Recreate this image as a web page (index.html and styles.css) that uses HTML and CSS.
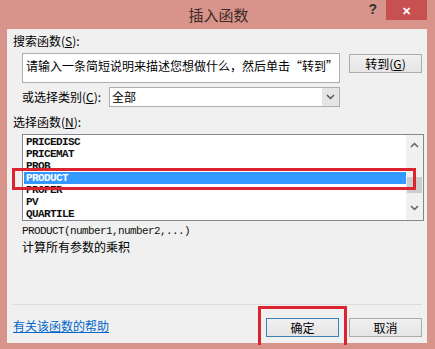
FILE: index.html
```html
<!DOCTYPE html>
<html lang="zh-CN">
<head>
    <meta charset="UTF-8">
    <meta name="viewport" content="width=device-width, initial-scale=1.0">
    <title>插入函数</title>
    <link rel="stylesheet" href="styles.css">
</head>
<body>
    <div class="window">
        <div class="titlebar">
            <span class="title">插入函数</span>
            <span class="help">?</span>
            <span class="close">&#x2715;</span>
        </div>
        <div class="client">
            <div class="label">搜索函数(<u>S</u>):</div>
            <div class="search-row">
                <div class="search-box">请输入一条简短说明来描述您想做什么，然后单击“转到”</div>
                <div class="btn go">转到(<u>G</u>)</div>
            </div>
            <div class="category-row">
                <span class="cat-label">或选择类别(<u>C</u>):</span>
                <div class="select">
                    <span class="select-value">全部</span>
                    <span class="select-arrow">
                        <svg width="9" height="6" viewBox="0 0 9 6"><path d="M1 1 L4.5 4.5 L8 1" fill="none" stroke="#555" stroke-width="1.5"/></svg>
                    </span>
                </div>
            </div>
            <div class="label list-label">选择函数(<u>N</u>):</div>
            <div class="listbox">
                <div class="items">
                    <div class="item">PRICEDISC</div>
                    <div class="item">PRICEMAT</div>
                    <div class="item">PROB</div>
                    <div class="item selected">PRODUCT</div>
                    <div class="item">PROPER</div>
                    <div class="item">PV</div>
                    <div class="item">QUARTILE</div>
                </div>
                <div class="scrollbar">
                    <svg width="9" height="6" viewBox="0 0 9 6"><path d="M1 5 L4.5 1.5 L8 5" fill="none" stroke="#606060" stroke-width="1.5"/></svg>
                    <div class="thumb"></div>
                    <svg width="9" height="6" viewBox="0 0 9 6"><path d="M1 1 L4.5 4.5 L8 1" fill="none" stroke="#606060" stroke-width="1.5"/></svg>
                </div>
                <div class="mark mark-item"></div>
            </div>
            <div class="signature">PRODUCT(number1,number2,...)</div>
            <div class="desc">计算所有参数的乘积</div>
            <div class="separator"></div>
            <div class="footer">
                <a class="help-link" href="#">有关该函数的帮助</a>
                <div class="buttons">
                    <div class="btn ok">确定<div class="mark mark-ok"></div></div>
                    <div class="btn">取消</div>
                </div>
            </div>
        </div>
    </div>
</body>
</html>
```

FILE: styles.css
```css
body {
    margin: 0;
    font-family: "Noto Sans CJK SC", "Noto Sans", sans-serif;
    font-size: 12px;
    color: #000;
}

.window {
    width: 435px;
    height: 349px;
    background-color: #d8938a;
    padding: 0 8px 6px 7px;
    box-sizing: border-box;
    display: flex;
    flex-direction: column;
}

.titlebar {
    height: 29px;
    position: relative;
    display: flex;
    justify-content: center;
    align-items: center;
}

.title {
    font-size: 15px;
    color: #3a2a28;
    margin-left: 3px;
}

.help {
    position: absolute;
    right: 50px;
    top: 1px;
    font-family: "Liberation Sans", sans-serif;
    font-weight: bold;
    font-size: 14px;
    color: #333;
}

.close {
    position: absolute;
    right: 0;
    top: 0;
    width: 41px;
    height: 20px;
    background-color: #c75050;
    color: #fff;
    font-size: 11px;
    font-weight: bold;
    display: flex;
    align-items: center;
    justify-content: center;
}

.client {
    flex: 1;
    background-color: #f0f0f0;
    padding: 5px 0 0 6px;
    display: flex;
    flex-direction: column;
    line-height: 14px;
}

.label u, .cat-label u, .go u {
    text-underline-offset: 1px;
}

.search-row {
    display: flex;
    margin: 5px 0 0 9px;
}

.search-box {
    width: 318px;
    height: 30px;
    box-sizing: border-box;
    background: #fff;
    border: 1px solid #abadb3;
    padding: 5px 3px;
    line-height: 14px;
    white-space: nowrap;
    overflow: hidden;
}

.btn {
    width: 73px;
    height: 19px;
    box-sizing: border-box;
    border: 1px solid #acacac;
    background: linear-gradient(#f0f0f0, #e5e5e5);
    display: flex;
    align-items: center;
    justify-content: center;
    line-height: 14px;
    position: relative;
}

.go {
    margin: 1px 0 0 9px;
}

.category-row {
    display: flex;
    align-items: center;
    margin: 4px 0 0 9px;
}

.cat-label {
    width: 87px;
}

.select {
    width: 231px;
    height: 20px;
    box-sizing: border-box;
    background: #fff;
    border: 1px solid #abadb3;
    display: flex;
    align-items: center;
    justify-content: space-between;
}

.select-value {
    padding-left: 2px;
}

.select-arrow {
    width: 17px;
    height: 18px;
    background: #e5e5e5;
    display: flex;
    align-items: center;
    justify-content: center;
}

.list-label {
    margin-top: 8px;
}

.listbox {
    position: relative;
    margin: 5px 0 0 9px;
    width: 402px;
    height: 87px;
    box-sizing: border-box;
    border: 1px solid #828790;
    background: #fff;
    display: flex;
}

.items {
    flex: 1;
    padding: 1px 0 0 1px;
    overflow: hidden;
}

.item {
    height: 12px;
    line-height: 12px;
    padding-left: 2px;
    font-family: "Liberation Mono", monospace;
    font-size: 11px;
    letter-spacing: -0.6px;
    font-weight: bold;
    color: #111;
}

.item.selected {
    background-color: #3399ff;
    color: #fff;
}

.scrollbar {
    width: 17px;
    background: #f0f0f0;
    display: flex;
    flex-direction: column;
    align-items: center;
    padding: 7px 0 5px;
    box-sizing: border-box;
}

.thumb {
    width: 15px;
    height: 16px;
    background: #cdcdcd;
    margin: 29px 0 12px;
}

.mark {
    position: absolute;
    border: 3px solid #dc2330;
    box-sizing: border-box;
}

.mark-item {
    left: -11px;
    top: 33px;
    width: 404px;
    height: 22px;
}

.signature {
    margin: 3px 0 0 9px;
    font-family: "Liberation Mono", monospace;
    font-size: 11px;
    letter-spacing: -0.6px;
    color: #111;
}

.desc {
    margin: 2px 0 0 9px;
}

.separator {
    margin: 50px 5px 0 0;
    height: 1px;
    background: #dcdcdc;
}

.footer {
    display: flex;
    justify-content: space-between;
    align-items: center;
    margin-top: 13px;
    padding-right: 5px;
}

.help-link {
    color: #0066cc;
    text-decoration: underline;
    margin-top: -4px;
}

.buttons {
    display: flex;
    gap: 10px;
}

.btn.ok {
    border-color: #3c7fb1;
}

.mark-ok {
    left: -9px;
    top: -13px;
    width: 89px;
    height: 39px;
    border-bottom: none;
}
```
